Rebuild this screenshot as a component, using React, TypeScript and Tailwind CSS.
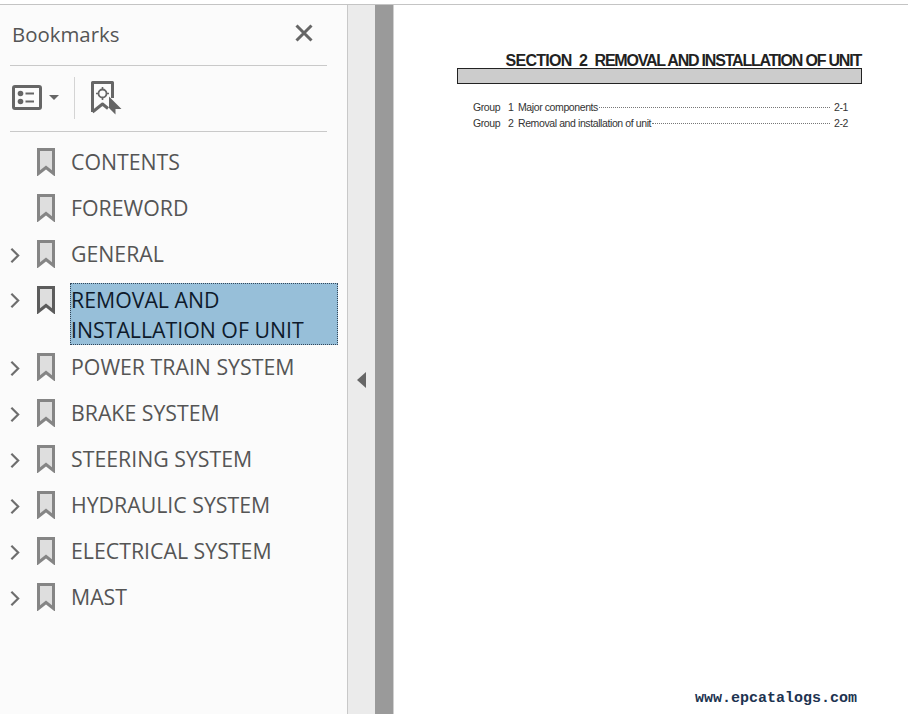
import { Fragment } from "react"

const items = [
  { label: "CONTENTS", expandable: false },
  { label: "FOREWORD", expandable: false },
  { label: "GENERAL", expandable: true },
  { label: "REMOVAL AND\nINSTALLATION OF UNIT", expandable: true, selected: true },
  { label: "POWER TRAIN SYSTEM", expandable: true },
  { label: "BRAKE SYSTEM", expandable: true },
  { label: "STEERING SYSTEM", expandable: true },
  { label: "HYDRAULIC SYSTEM", expandable: true },
  { label: "ELECTRICAL SYSTEM", expandable: true },
  { label: "MAST", expandable: true },
]

function BookmarkIcon({ dark }: { dark?: boolean }) {
  return (
    <svg width="18" height="28" viewBox="0 0 18 28" className="shrink-0">
      <path d="M1.5 1.5H16.5V25.5L9 19.5L1.5 25.5Z" fill="#dedede" stroke={dark ? "#5c5c5c" : "#858585"} strokeWidth="3" />
    </svg>
  )
}

function Chevron() {
  return (
    <svg width="10" height="17" viewBox="0 0 11 18">
      <path d="M1.5 1.5L9 9L1.5 16.5" fill="none" stroke="#6e6e6e" strokeWidth="2.4" />
    </svg>
  )
}

function Row({ label, expandable, selected }: { label: string; expandable: boolean; selected?: boolean }) {
  return (
    <div className={selected ? "flex items-start pt-[6px] -mb-px" : "flex items-start py-2"}>
      <div className={selected ? "w-[37px] pl-[10px] pt-[9px] shrink-0" : "w-[37px] pl-[10px] pt-2 shrink-0"}>
        {expandable && <Chevron />}
      </div>
      <div className={selected ? "w-[33px] pt-[3px] shrink-0" : "w-[34px] shrink-0 mt-px"}>
        <BookmarkIcon dark={selected} />
      </div>
      {selected ? (
        <div className="w-[268px] h-[62px] pt-[2px] pl-px bg-[#97bfd9] outline-1 -outline-offset-1 outline-dotted outline-[#33475a] text-[#0e1a2b] text-[21.3px] leading-[30px] whitespace-nowrap">
          {label.split("\n").map((line) => (
            <Fragment key={line}>
              {line}
              <br />
            </Fragment>
          ))}
        </div>
      ) : (
        <div className="text-[#555] text-[21.3px] leading-[30px] whitespace-nowrap">{label}</div>
      )}
    </div>
  )
}

function TocLine({ n, title, page }: { n: string; title: string; page: string }) {
  return (
    <div className="flex items-baseline h-4 text-[10.5px] leading-4 text-[#333] tracking-[-0.4px] whitespace-nowrap">
      <span className="w-[35px]">Group</span>
      <span className="w-[10px]">{n}</span>
      <span>{title}</span>
      <span className="flex-1 mx-px border-b border-dotted border-[#777] translate-y-[-3px]" />
      <span className="ml-[3px] w-[14px]">{page}</span>
    </div>
  )
}

export default function App() {
  return (
    <div className="w-[908px] h-[714px] overflow-hidden bg-white flex flex-col font-['Open_Sans',sans-serif]">
      <div className="h-[5px] shrink-0 border-b border-[#c4c4c4] bg-white" />
      <div className="flex flex-1 min-h-0">
        <aside className="w-[348px] shrink-0 bg-[#fbfbfb] border-r border-[#c8c8c8] flex flex-col">
          <div className="mx-[10px] w-[317px] h-[61px] flex items-center justify-between border-b border-[#c9c9c9] pl-[2px] pr-[14px] pb-[1px]">
            <span className="text-[#555] text-[20.4px]">Bookmarks</span>
            <svg width="18" height="18" viewBox="0 0 18 18" className="mb-[3px]">
              <path d="M1.5 1.5L16.5 16.5M16.5 1.5L1.5 16.5" stroke="#666" strokeWidth="3" />
            </svg>
          </div>
          <div className="mx-[10px] w-[317px] h-[66px] shrink-0 flex items-center border-b border-[#c9c9c9] pl-[2px] pb-[2px]">
            <svg width="30" height="25" viewBox="0 0 30 25">
              <rect x="1.5" y="1.5" width="27" height="22" rx="1.5" fill="#fbfbfb" stroke="#666" strokeWidth="3" />
              <circle cx="8.5" cy="8.5" r="2.8" fill="#666" />
              <circle cx="8.5" cy="16.5" r="2.8" fill="#666" />
              <path d="M13.5 8.5H22M13.5 16.5H22" stroke="#666" strokeWidth="2.2" />
            </svg>
            <svg width="10" height="5" viewBox="0 0 10 5" className="ml-[7px]">
              <path d="M0 0H10L5 5Z" fill="#666" />
            </svg>
            <div className="w-px h-[42px] bg-[#d4d4d4] ml-[15px]" />
            <svg width="31" height="34" viewBox="0 0 31 34" className="ml-[16px]">
              <path d="M1.5 31V1.5H21.5V17M1.5 31L11.5 23L17 27.5" fill="none" stroke="#666" strokeWidth="3" strokeLinejoin="round" />
              <path d="M18 15.5L30.5 28H24.5V33.5L18 27Z" fill="#666" />
              <circle cx="11.5" cy="12.5" r="4" fill="none" stroke="#666" strokeWidth="1.8" />
              <path d="M11.5 6V8.5M11.5 16.5V19M5 12.5H7.5M15.5 12.5H18" stroke="#666" strokeWidth="1.6" />
            </svg>
          </div>
          <div className="pt-[7px] flex flex-col">
            {items.map((item) => (
              <Row key={item.label} {...item} />
            ))}
          </div>
        </aside>
        <div className="w-[27px] shrink-0 bg-[#ebebeb] flex items-center justify-center pt-[41px]">
          <svg width="9" height="16" viewBox="0 0 9 16">
            <path d="M9 0V16L0 8Z" fill="#666" />
          </svg>
        </div>
        <div className="w-[19px] shrink-0 bg-[#9a9a9a] border-r border-[#d0d0d0]" />
        <main className="flex-1 min-w-0 bg-white flex flex-col pl-[63px] pr-[46px] pt-[47px] font-['Liberation_Sans',sans-serif]">
          <div className="pr-px text-right font-bold text-[16px] leading-[17px] text-[#222] tracking-[-1.2px] whitespace-pre">
            <span className="tracking-[-0.74px]">SECTION  2  </span>
            REMOVAL AND INSTALLATION OF UNIT
          </div>
          <div className="h-[16px] bg-[#cccccc] border border-[#222] -mt-px" />
          <div className="pl-4 pr-[14px] mt-[15px]">
            <TocLine n="1" title="Major components" page="2-1" />
            <TocLine n="2" title="Removal and installation of unit" page="2-2" />
          </div>
          <div className="mt-auto pb-[6px] pr-[5px] text-right font-['Liberation_Mono',monospace] font-bold text-[15px] leading-[18px] text-[#1d3350]">
            www.epcatalogs.com
          </div>
        </main>
      </div>
    </div>
  )
}
